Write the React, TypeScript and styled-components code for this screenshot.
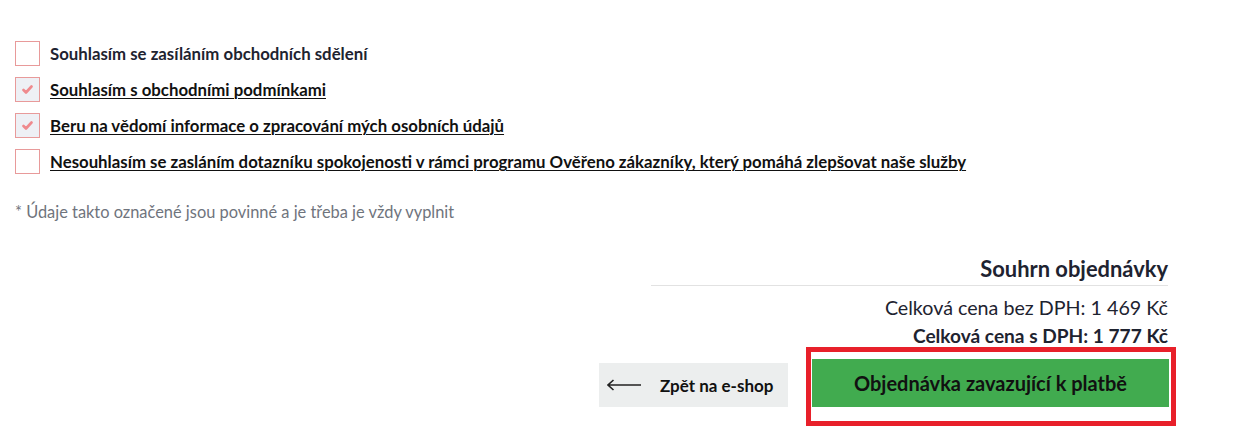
import React from "react";
import styled, { createGlobalStyle } from "styled-components";

const Global = createGlobalStyle`
  html, body { margin: 0; padding: 0; background: #fff; }
  body { font-family: Lato, "Noto Sans", sans-serif; color: #1e2330; }
  * { box-sizing: border-box; }
`;

const Page = styled.div`
  width: 1237px;
  height: 431px;
  padding: 41px 69px 0 15px;
  display: flex;
  flex-direction: column;
`;

const Consents = styled.div`
  display: flex;
  flex-direction: column;
  gap: 11px;
`;

const ConsentRow = styled.label`
  display: flex;
  align-items: center;
  gap: 10px;
  height: 25px;
`;

const Box = styled.span<{ $checked?: boolean }>`
  width: 25px;
  height: 25px;
  flex: none;
  border: 1px solid #e89a9a;
  background: ${(p) => (p.$checked ? "#eef0f5" : "#fff")};
  display: flex;
  align-items: center;
  justify-content: center;
`;

const ConsentText = styled.span<{ $link?: boolean }>`
  font-size: 16.8px;
  font-weight: 700;
  color: ${(p) => (p.$link ? "#111" : "#1e2330")};
  text-decoration: ${(p) => (p.$link ? "underline" : "none")};
  text-underline-offset: 2px;
  text-decoration-thickness: 1px;
`;

const Note = styled.p`
  margin: 28px 0 0;
  font-size: 16.4px;
  line-height: 20px;
  color: #6f747d;
`;

const Summary = styled.div`
  margin-top: 34px;
  align-self: flex-end;
  width: 517px;
  display: flex;
  flex-direction: column;
  align-items: flex-end;
`;

const Title = styled.h2`
  margin: 0;
  font-size: 21.9px;
  line-height: 25px;
  font-weight: 700;
  color: #1e2330;
`;

const Divider = styled.hr`
  width: 100%;
  margin: 4px 0 0;
  border: none;
  border-top: 1px solid #e2e2e2;
`;

const PriceLine = styled.div<{ $bold?: boolean }>`
  margin-top: ${(p) => (p.$bold ? "6px" : "11px")};
  font-size: ${(p) => (p.$bold ? "19.1px" : "19.7px")};
  font-weight: ${(p) => (p.$bold ? 700 : 400)};
  line-height: 22px;
  color: #1e2330;
`;

const Actions = styled.div`
  margin-top: 12px;
  margin-right: -1px;
  display: flex;
  align-items: flex-end;
  gap: 24px;
`;

const BackButton = styled.button`
  width: 189px;
  height: 44px;
  border: none;
  background: #eceeee;
  display: flex;
  align-items: center;
  gap: 19px;
  padding: 0 0 0 8px;
  font-family: inherit;
  font-size: 17px;
  font-weight: 700;
  color: #111;
  cursor: pointer;
`;

const Highlight = styled.div`
  position: relative;
  &::after {
    content: "";
    position: absolute;
    left: -6px;
    top: -12px;
    right: -7px;
    bottom: -19px;
    border: 5px solid #e8202a;
    pointer-events: none;
  }
`;

const SubmitButton = styled.button`
  width: 357px;
  height: 48px;
  border: none;
  background: #41ab4f;
  font-family: inherit;
  font-size: 20px;
  font-weight: 700;
  color: #111;
  cursor: pointer;
  padding: 0;
`;

const Check = () => (
  <svg width="11" height="9" viewBox="0 0 11 9">
    <path d="M1.5 5 L4 7.5 L9.5 1.5" fill="none" stroke="#ef8a8e" strokeWidth="2.6" strokeLinecap="round" strokeLinejoin="round" />
  </svg>
);

const Arrow = () => (
  <svg width="34" height="12" viewBox="0 0 34 12">
    <path d="M1 6 H34 M6.5 1 L1 6 L6.5 11" fill="none" stroke="#222" strokeWidth="1.6" />
  </svg>
);

const consents = [
  { text: "Souhlasím se zasíláním obchodních sdělení", checked: false, link: false },
  { text: "Souhlasím s obchodními podmínkami", checked: true, link: true },
  { text: "Beru na vědomí informace o zpracování mých osobních údajů", checked: true, link: true },
  {
    text: "Nesouhlasím se zasláním dotazníku spokojenosti v rámci programu Ověřeno zákazníky, který pomáhá zlepšovat naše služby",
    checked: false,
    link: true,
  },
];

export default function App() {
  return (
    <>
      <Global />
      <Page>
        <Consents>
          {consents.map((c) => (
            <ConsentRow key={c.text}>
              <Box $checked={c.checked}>{c.checked && <Check />}</Box>
              <ConsentText $link={c.link}>{c.text}</ConsentText>
            </ConsentRow>
          ))}
        </Consents>
        <Note>* Údaje takto označené jsou povinné a je třeba je vždy vyplnit</Note>
        <Summary>
          <Title>Souhrn objednávky</Title>
          <Divider />
          <PriceLine>Celková cena bez DPH: 1 469 Kč</PriceLine>
          <PriceLine $bold>Celková cena s DPH: 1 777 Kč</PriceLine>
          <Actions>
            <BackButton>
              <Arrow />
              Zpět na e-shop
            </BackButton>
            <Highlight>
              <SubmitButton>Objednávka zavazující k platbě</SubmitButton>
            </Highlight>
          </Actions>
        </Summary>
      </Page>
    </>
  );
}
